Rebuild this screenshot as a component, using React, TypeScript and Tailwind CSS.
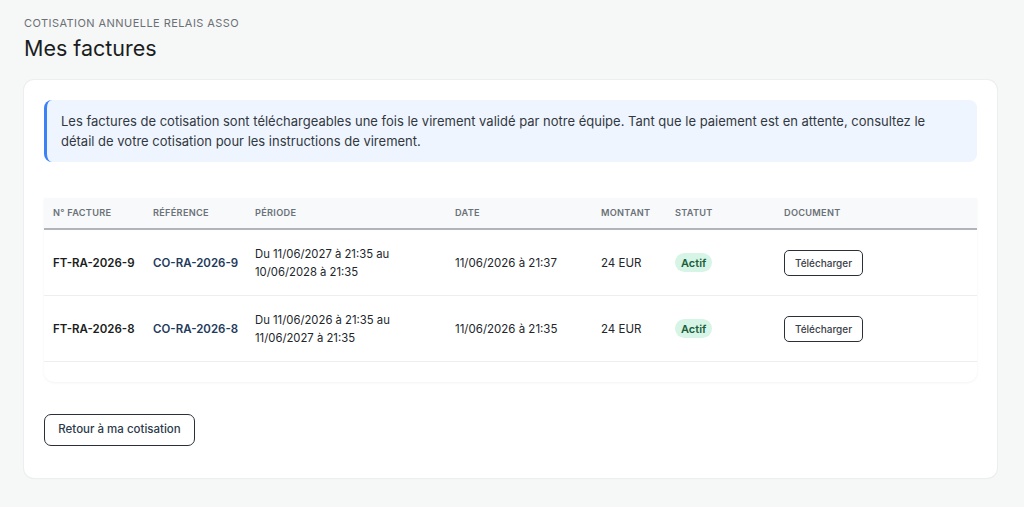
import React from "react";

const rows = [
  {
    num: "FT-RA-2026-9",
    ref: "CO-RA-2026-9",
    p1: "Du 11/06/2027 à 21:35 au",
    p2: "10/06/2028 à 21:35",
    date: "11/06/2026 à 21:37",
  },
  {
    num: "FT-RA-2026-8",
    ref: "CO-RA-2026-8",
    p1: "Du 11/06/2026 à 21:35 au",
    p2: "11/06/2027 à 21:35",
    date: "11/06/2026 à 21:35",
  },
];

export default function App() {
  return (
    <div
      className="min-h-[507px] bg-[#f6f7f7] pl-6 pt-[16px] pb-7 text-[#1f2328]"
      style={{ fontFamily: "Inter, 'Noto Sans', sans-serif" }}
    >
      <div className="text-[11px] leading-[14px] tracking-[0.04em] text-[#6b7075] uppercase">
        Cotisation annuelle relais asso
      </div>
      <h1 className="mt-[5px] text-[21.5px] leading-[26px] font-normal text-[#1a1d21]">Mes factures</h1>

      <div className="mt-[19px] w-[973px] rounded-[10px] bg-white p-5 shadow-[0_0_0_1px_#eceeef,0_1px_2px_rgba(0,0,0,0.03)]">
        <div className="rounded-lg border-l-[3px] border-[#3b82f6] bg-[#eef5fe] py-[11px] pl-[14px] pr-4 text-[13px] leading-[20px] text-[#33383e]">
          Les factures de cotisation sont téléchargeables une fois le virement validé par notre équipe. Tant que le paiement est en attente, consultez le détail de votre cotisation pour les instructions de virement.
        </div>

        <div className="mt-[36px] rounded-b-[10px] bg-white pb-5 shadow-[0_1px_3px_rgba(0,0,0,0.05)]">
          <div className="flex h-[32px] items-center border-b-2 border-[#b1b5ba] bg-[#f8f9fa] text-[9.2px] font-semibold tracking-[0.03em] text-[#6b7178] uppercase">
            <div className="w-[109px] pl-[9px]">N° Facture</div>
            <div className="w-[102px]">Référence</div>
            <div className="w-[200px]">Période</div>
            <div className="w-[146px]">Date</div>
            <div className="w-[74px]">Montant</div>
            <div className="w-[109px]">Statut</div>
            <div>Document</div>
          </div>
          {rows.map((r) => (
            <div key={r.num} className="flex h-[66px] items-center border-b border-[#eceef0] text-[11.5px] leading-[18px] text-[#22262b]">
              <div className="w-[109px] pl-[9px] font-semibold text-[#1a1d21]">{r.num}</div>
              <div className="w-[102px] font-semibold text-[#1e3a5c]">{r.ref}</div>
              <div className="w-[200px] text-[11.3px]">
                <div>{r.p1}</div>
                <div>{r.p2}</div>
              </div>
              <div className="w-[146px]">{r.date}</div>
              <div className="w-[74px]">24 EUR</div>
              <div className="w-[109px]">
                <span className="inline-flex h-[19px] items-center rounded-full bg-[#d6f5e6] px-[6px] text-[11px] font-semibold text-[#1b5e3b]">
                  Actif
                </span>
              </div>
              <div>
                <button className="h-[26px] w-[79px] rounded-[5px] border-[1.5px] border-[#2b3038] bg-white text-[10px] font-medium text-[#3b4148]">
                  Télécharger
                </button>
              </div>
            </div>
          ))}
        </div>

        <button className="mt-[32px] mb-[12px] h-[32px] w-[151px] rounded-[7px] border-[1.5px] border-[#2b3038] bg-white text-[11.5px] font-medium text-[#2c3a4b]">
          Retour à ma cotisation
        </button>
      </div>
    </div>
  );
}
